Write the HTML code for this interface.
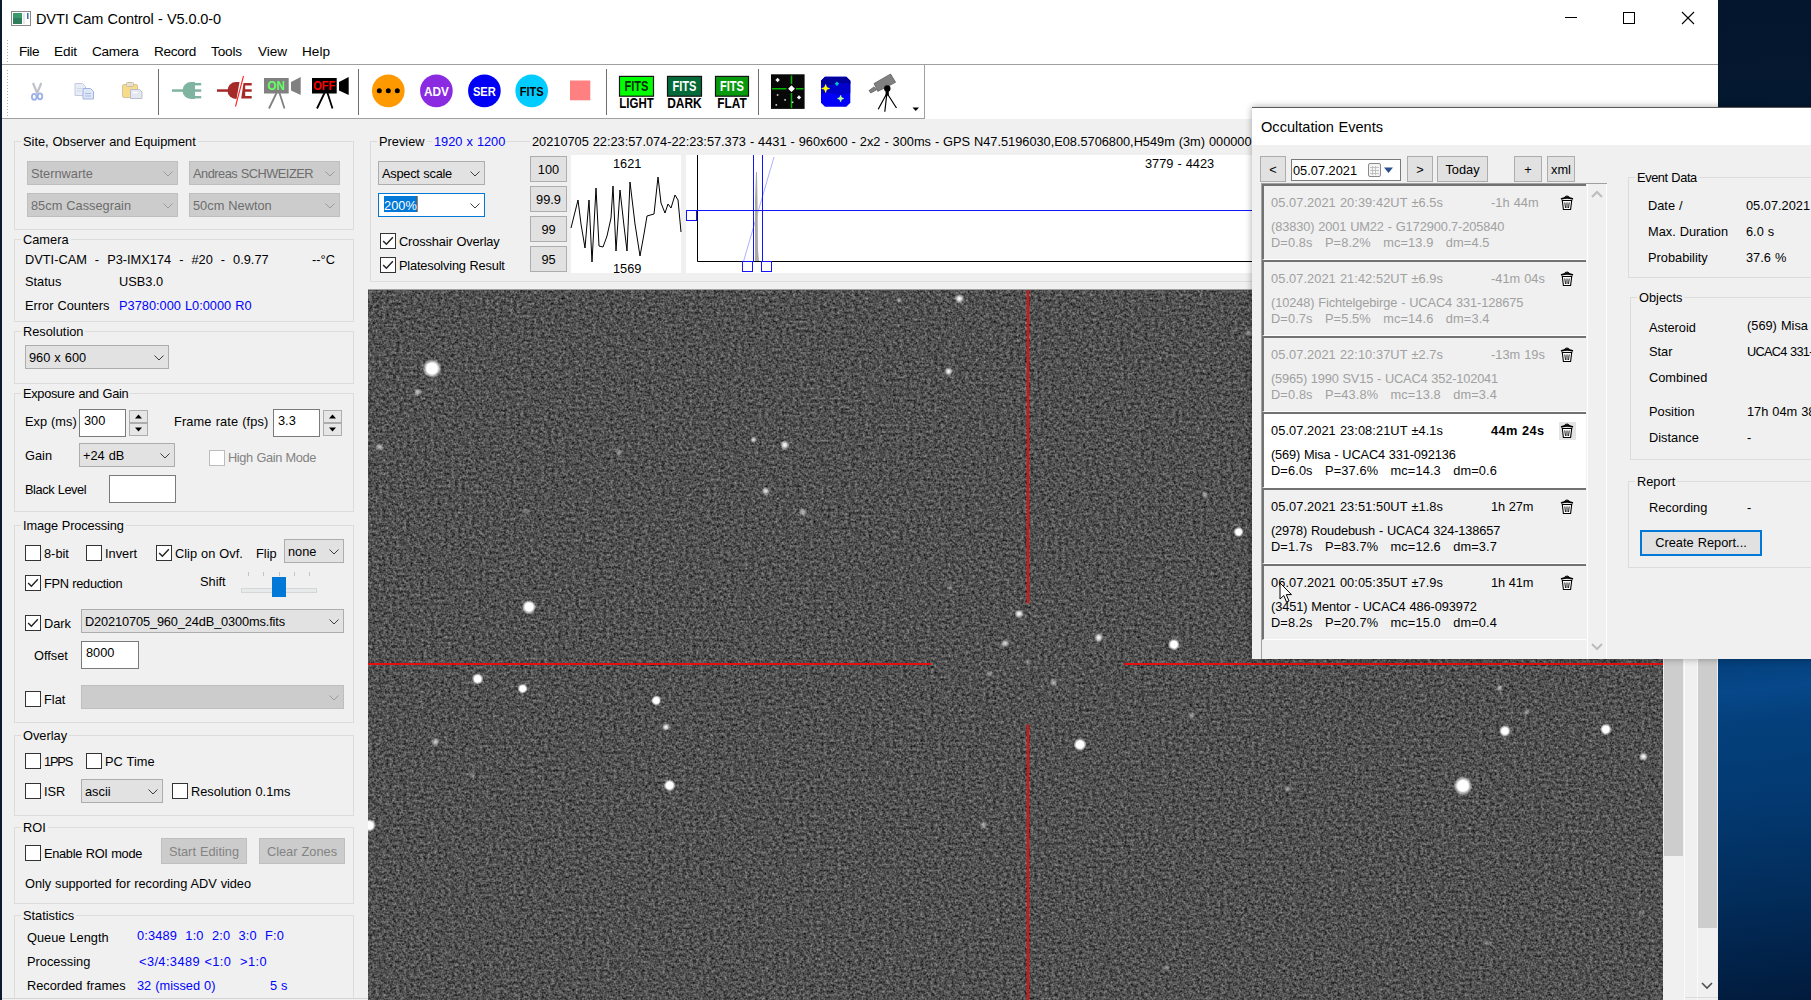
<!DOCTYPE html>
<html><head><meta charset="utf-8"><title>DVTI Cam Control - V5.0.0-0</title>
<style>
html,body{margin:0;padding:0;}
body{width:1811px;height:1000px;overflow:hidden;position:relative;background:#f0f0f0;font-family:"Liberation Sans",sans-serif;font-size:12.8px;color:#000;}
.t{position:absolute;white-space:pre;line-height:16px;font-size:12.8px;word-spacing:0.45px;}
.tt{white-space:pre;font-size:12.8px;word-spacing:0.45px;}
.abs{position:absolute}
</style></head><body>

<div class="" style="position:absolute;left:1718px;top:0px;width:93px;height:1000px;background:linear-gradient(174deg,#04162d 0%,#04182f 10.7%,#04407d 65.8%,#07488a 68.7%,#04407c 71.5%,#033970 80%,#022b58 90%,#011b3c 100%)"></div>
<div class="" style="position:absolute;left:0px;top:0px;width:2px;height:1000px;background:#0b1a2c"></div>
<div class="" style="position:absolute;left:2px;top:0px;width:1716px;height:37px;background:#fff"></div>
<div class="" style="position:absolute;left:2px;top:37px;width:1716px;height:27px;background:#fff"></div>
<div class="" style="position:absolute;left:2px;top:64px;width:1716px;height:1px;background:#a0a0a0"></div>
<div class="" style="position:absolute;left:2px;top:65px;width:1716px;height:54px;background:#fff"></div>
<svg class="abs" style="left:11px;top:11px" width="20" height="15" viewBox="0 0 20 15"><rect x="0.5" y="0.5" width="19" height="14" fill="#fff" stroke="#8a8a8a"/><rect x="2" y="2" width="9" height="11" fill="#2f7d5b"/><rect x="2" y="2" width="9" height="5" fill="#3a9a6c"/><rect x="12" y="2" width="2" height="11" fill="#e8e8e8"/><rect x="16" y="2" width="1.5" height="6" fill="#3a6fb0"/></svg>
<div class="t " style="left:36px;top:10.71px;font-size:14.5px;letter-spacing:-0.109px;">DVTI Cam Control - V5.0.0-0</div>
<svg class="abs" style="left:1560px;top:6px" width="150" height="26" viewBox="0 0 150 26"><path d="M5 11.5 H17" stroke="#000" stroke-width="1"/><rect x="63.5" y="6.5" width="11" height="11" fill="none" stroke="#000"/><path d="M122 6 L134 18 M134 6 L122 18" stroke="#000" stroke-width="1.1"/></svg>
<div class="t " style="left:19px;top:43.51px;font-size:13.6px;letter-spacing:-0.477px;">File</div>
<div class="t " style="left:54px;top:43.51px;font-size:13.6px;letter-spacing:-0.109px;">Edit</div>
<div class="t " style="left:92px;top:43.51px;font-size:13.6px;letter-spacing:-0.310px;">Camera</div>
<div class="t " style="left:154px;top:43.51px;font-size:13.6px;letter-spacing:-0.305px;">Record</div>
<div class="t " style="left:211px;top:43.51px;font-size:13.6px;letter-spacing:-0.147px;">Tools</div>
<div class="t " style="left:258px;top:43.51px;font-size:13.6px;letter-spacing:-0.055px;">View</div>
<div class="t " style="left:302px;top:43.51px;font-size:13.6px;letter-spacing:0.008px;">Help</div>
<div class="" style="position:absolute;left:7px;top:40px;width:1px;height:1px;background:#b0b0b0"></div>
<div class="" style="position:absolute;left:7px;top:43px;width:1px;height:1px;background:#b0b0b0"></div>
<div class="" style="position:absolute;left:7px;top:46px;width:1px;height:1px;background:#b0b0b0"></div>
<div class="" style="position:absolute;left:7px;top:49px;width:1px;height:1px;background:#b0b0b0"></div>
<div class="" style="position:absolute;left:7px;top:52px;width:1px;height:1px;background:#b0b0b0"></div>
<div class="" style="position:absolute;left:7px;top:55px;width:1px;height:1px;background:#b0b0b0"></div>
<div class="" style="position:absolute;left:7px;top:58px;width:1px;height:1px;background:#b0b0b0"></div>
<div class="" style="position:absolute;left:7px;top:61px;width:1px;height:1px;background:#b0b0b0"></div>
<div class="" style="position:absolute;left:7px;top:70px;width:1px;height:1px;background:#b0b0b0"></div>
<div class="" style="position:absolute;left:7px;top:73px;width:1px;height:1px;background:#b0b0b0"></div>
<div class="" style="position:absolute;left:7px;top:76px;width:1px;height:1px;background:#b0b0b0"></div>
<div class="" style="position:absolute;left:7px;top:79px;width:1px;height:1px;background:#b0b0b0"></div>
<div class="" style="position:absolute;left:7px;top:82px;width:1px;height:1px;background:#b0b0b0"></div>
<div class="" style="position:absolute;left:7px;top:85px;width:1px;height:1px;background:#b0b0b0"></div>
<div class="" style="position:absolute;left:7px;top:88px;width:1px;height:1px;background:#b0b0b0"></div>
<div class="" style="position:absolute;left:7px;top:91px;width:1px;height:1px;background:#b0b0b0"></div>
<div class="" style="position:absolute;left:7px;top:94px;width:1px;height:1px;background:#b0b0b0"></div>
<div class="" style="position:absolute;left:7px;top:97px;width:1px;height:1px;background:#b0b0b0"></div>
<div class="" style="position:absolute;left:7px;top:100px;width:1px;height:1px;background:#b0b0b0"></div>
<div class="" style="position:absolute;left:7px;top:103px;width:1px;height:1px;background:#b0b0b0"></div>
<div class="" style="position:absolute;left:7px;top:106px;width:1px;height:1px;background:#b0b0b0"></div>
<div class="" style="position:absolute;left:7px;top:109px;width:1px;height:1px;background:#b0b0b0"></div>
<div class="" style="position:absolute;left:7px;top:112px;width:1px;height:1px;background:#b0b0b0"></div>
<div class="" style="position:absolute;left:7px;top:115px;width:1px;height:1px;background:#b0b0b0"></div>
<div class="" style="position:absolute;left:2px;top:118px;width:923px;height:1px;background:#a0a0a0"></div>
<div class="" style="position:absolute;left:924px;top:65px;width:1px;height:54px;background:#a0a0a0"></div>
<!-- toolbar -->
<div class="" style="position:absolute;left:158px;top:69px;width:1px;height:46px;background:#6e6e6e"></div>
<div class="" style="position:absolute;left:358px;top:69px;width:1px;height:46px;background:#6e6e6e"></div>
<div class="" style="position:absolute;left:606px;top:69px;width:1px;height:46px;background:#6e6e6e"></div>
<div class="" style="position:absolute;left:758px;top:69px;width:1px;height:46px;background:#6e6e6e"></div>
<svg class="abs" style="left:0;top:65px" width="925" height="54" viewBox="0 65 925 54" font-family="Liberation Sans, sans-serif"><g opacity="0.9"><path d="M33 83 L37.300 93.500 M41.300 83 L37 93.500" stroke="#b9bcc4" stroke-width="2.2" fill="none"/><ellipse cx="34.200" cy="96.800" rx="2.300" ry="3" fill="#fff" stroke="#90a8e8" stroke-width="1.8"/><ellipse cx="40" cy="96.300" rx="2.300" ry="3" fill="#fff" stroke="#90a8e8" stroke-width="1.8"/></g><g><path d="M75 83.5 h7.5 l3 3 v9 h-10.5z" fill="#e9edf6" stroke="#c3cbe0"/><path d="M83 88.5 h7.5 l3 3 v7.5 h-10.5z" fill="#dfe6f6" stroke="#9fb2e2"/><path d="M85 93.5h6M85 96h6" stroke="#a9bce8" stroke-width="1"/><path d="M77 88.5h5M77 91h4" stroke="#cdd5ea" stroke-width="1"/></g><g transform="translate(-1,0)"><rect x="123.5" y="84.5" width="15" height="13" rx="1.5" fill="#f6dc8a" stroke="#d9c39a"/><rect x="127.5" y="82.5" width="7" height="4" rx="1" fill="#e8e1cf" stroke="#c9bfa6"/><path d="M131.5 89.5 h9 l2.500 2.5 v6.500 h-11.500z" fill="#e4e8f0" stroke="#b9bfcc"/><path d="M133.500 92.500h5" stroke="#fff" stroke-width="1.5"/></g><g fill="#7fb5a0"><rect x="172" y="89.300" width="12" height="2.500"/><path d="M195 82 h-4 a8.500 8.500 0 0 0 0 17 h4z"/><rect x="194" y="83" width="7.200" height="2.400"/><rect x="194" y="89.300" width="7.200" height="2.500"/><rect x="194" y="96" width="7.200" height="2.400"/></g><g fill="#a52a2a"><rect x="217" y="89.300" width="12" height="2.500"/><path d="M239.500 82 h-3.500 a8.500 8.500 0 0 0 0 17 h0.500z"/><path d="M243.500 83 h8.200 v2.400 h-6.500 v3.900 h6.500 v2.500 h-6.500 v4.200 h6.500 v2.400 h-10.500z"/></g><path d="M243.500 76 L235.500 106.500" stroke="#ff2222" stroke-width="1.100"/><g><rect x="264" y="78" width="24.700" height="15.500" fill="#808080"/><path d="M291 82 L300.7 77 V95 L291 90.500z" fill="#808080"/><path d="M276.5 93 L269 108.500 M279.5 93 L284.5 108.500" stroke="#808080" stroke-width="1.800" fill="none"/><text x="276.3" y="90.300" text-anchor="middle" font-size="12.500" font-weight="bold" fill="#66ff66" textLength="17.5" lengthAdjust="spacingAndGlyphs">ON</text></g><g><rect x="312" y="78" width="24.700" height="15.500" fill="#000"/><path d="M339 82 L348.7 77 V95 L339 90.500z" fill="#000"/><path d="M324.5 93 L317 108.500 M327.5 93 L332.5 108.500" stroke="#000" stroke-width="1.800" fill="none"/><text x="324.3" y="90.300" text-anchor="middle" font-size="12.500" font-weight="bold" fill="#ff0000" textLength="22" lengthAdjust="spacingAndGlyphs">OFF</text></g><circle cx="388.3" cy="90.900" r="16.300" fill="#ff9900"/><circle cx="379.3" cy="90.700" r="2.500" fill="#000"/><circle cx="388.3" cy="90.700" r="2.500" fill="#000"/><circle cx="397.3" cy="90.700" r="2.500" fill="#000"/><circle cx="436.4" cy="90.900" r="16.300" fill="#8a2be2"/><text x="436.4" y="95.500" text-anchor="middle" font-size="12.800" font-weight="bold" fill="#fff" textLength="25" lengthAdjust="spacingAndGlyphs">ADV</text><circle cx="484.4" cy="90.900" r="16.300" fill="#0000f5"/><text x="484.4" y="95.500" text-anchor="middle" font-size="12.800" font-weight="bold" fill="#fff" textLength="23" lengthAdjust="spacingAndGlyphs">SER</text><circle cx="531.7" cy="90.900" r="16.300" fill="#00ccff"/><text x="531.7" y="95.500" text-anchor="middle" font-size="12.800" font-weight="bold" fill="#000" textLength="24" lengthAdjust="spacingAndGlyphs">FITS</text><rect x="570" y="80.500" width="20.300" height="19.800" fill="#ff8080"/><rect x="619.5" y="76.400" width="34" height="19.800" fill="#00ff00" stroke="#141414" stroke-width="1.200"/><text x="636.5" y="90.500" text-anchor="middle" font-size="14.200" font-weight="bold" fill="#042a0c" textLength="24" lengthAdjust="spacingAndGlyphs">FITS</text><text x="636.5" y="107.800" text-anchor="middle" font-size="14.200" font-weight="bold" fill="#000" textLength="34.5" lengthAdjust="spacingAndGlyphs">LIGHT</text><rect x="667.5" y="76.400" width="34" height="19.800" fill="#056a3a" stroke="#141414" stroke-width="1.200"/><text x="684.5" y="90.500" text-anchor="middle" font-size="14.200" font-weight="bold" fill="#fff" textLength="24" lengthAdjust="spacingAndGlyphs">FITS</text><text x="684.5" y="107.800" text-anchor="middle" font-size="14.200" font-weight="bold" fill="#000" textLength="34.5" lengthAdjust="spacingAndGlyphs">DARK</text><rect x="715.5" y="76.400" width="33" height="19.800" fill="#079a0c" stroke="#141414" stroke-width="1.200"/><text x="732.0" y="90.500" text-anchor="middle" font-size="14.200" font-weight="bold" fill="#fff" textLength="24" lengthAdjust="spacingAndGlyphs">FITS</text><text x="732.0" y="107.800" text-anchor="middle" font-size="14.200" font-weight="bold" fill="#000" textLength="29.5" lengthAdjust="spacingAndGlyphs">FLAT</text><rect x="771" y="74.300" width="33.600" height="34.600" fill="#080808"/><path d="M791.500 75.500 V84 M791.500 93 V108 M772 88.700 H786.500 M796 88.700 H803.600" stroke="#00b400" stroke-width="1.500"/><path d="M788.1 88.7 L791.5 85.3 L794.9 88.7 L791.5 92.10000000000001z" fill="#fff"/><path d="M775.4 80 L777.6 77.8 L779.8000000000001 80 L777.6 82.2z" fill="#f4f4ff"/><path d="M796.8 97.4 L799 95.2 L801.2 97.4 L799 99.60000000000001z" fill="#f4f4ff"/><rect x="776.8000000000001" y="94.2" width="1.600" height="1.600" fill="#d8d8e0"/><rect x="784.3000000000001" y="99.10000000000001" width="1.600" height="1.600" fill="#d8d8e0"/><rect x="775.5" y="104.10000000000001" width="1.600" height="1.600" fill="#d8d8e0"/><rect x="791.8000000000001" y="101.5" width="1.600" height="1.600" fill="#d8d8e0"/><path d="M825 76.800 h21.300 l4 4 v22 l-4 4 h-21.300 l-4 -4 v-22z" fill="#0000fa"/><path d="M821 94 q7 -1.500 14 0 t15.300 -1 v-12 l-4 -4 h-21.300 l-4 4z" fill="#0000cc"/><path d="M821 84 q7 2 14 0 t15.300 0 v-3.200 l-4 -4 h-21.300 l-4 4z" fill="#00009c"/><path d="M821.6 88.5 Q825.6 88.5 825.6 84.5 Q825.6 88.5 829.6 88.5 Q825.6 88.5 825.6 92.5 Q825.6 88.5 821.6 88.5z" fill="#ffff00" stroke="#ffff00" stroke-width="1.100"/><path d="M834.9 83.7 Q836.9 83.7 836.9 81.7 Q836.9 83.7 838.9 83.7 Q836.9 83.7 836.9 85.7 Q836.9 83.7 834.9 83.7z" fill="#00c8d0" stroke="#00c8d0" stroke-width="1.100"/><path d="M837.4 98.5 Q840.6 98.5 840.6 95.3 Q840.6 98.5 843.8000000000001 98.5 Q840.6 98.5 840.6 101.7 Q840.6 98.5 837.4 98.5z" fill="#b0ff90" stroke="#b0ff90" stroke-width="1.100"/><g><path d="M874 83.500 L890.600 74 L895.600 82.300 L877.800 91.400z" fill="#808080" stroke="#555" stroke-width="0.700"/><path d="M869 90.600 L874 86.900 L876.500 89.800 L870.800 93z" fill="#808080" stroke="#555" stroke-width="0.700"/><circle cx="887.300" cy="88.500" r="3.200" fill="#000"/><rect x="885.600" y="88" width="3.200" height="7.500" fill="#000"/><path d="M886.500 94 L878.200 109.200 M886.800 94 L884.800 111.700 M887.500 94 L896.500 108" stroke="#000" stroke-width="1.200" fill="none"/></g><path d="M912.500 107.500 h6.500 l-3.250 3.500z" fill="#000"/></svg>
<!-- left -->
<div class="" style="position:absolute;left:14px;top:141px;width:340px;height:89px;border:1px solid #dcdcdc;box-sizing:border-box"></div>
<div class="t" style="left:21px;top:134px;background:#f0f0f0;padding:0 2px;">Site, Observer and Equipment</div>
<div class="" style="position:absolute;left:27px;top:161px;width:151px;height:24px;background:#ccc;border:1px solid #bfbfbf;box-sizing:border-box"></div>
<div class="t " style="left:31px;top:165.77px;color:#6d6d6d;">Sternwarte</div>
<svg style="position:absolute;left:163px;top:171px" width="10" height="6" viewBox="0 0 10 6"><path d="M0.5 0.5 L5 5 L9.5 0.5" fill="none" stroke="#9a9a9a" stroke-width="1"/></svg>
<div class="" style="position:absolute;left:189px;top:161px;width:151px;height:24px;background:#ccc;border:1px solid #bfbfbf;box-sizing:border-box"></div>
<div class="t " style="left:193px;top:165.77px;color:#6d6d6d;letter-spacing:-0.497px;">Andreas SCHWEIZER</div>
<svg style="position:absolute;left:325px;top:171px" width="10" height="6" viewBox="0 0 10 6"><path d="M0.5 0.5 L5 5 L9.5 0.5" fill="none" stroke="#9a9a9a" stroke-width="1"/></svg>
<div class="" style="position:absolute;left:27px;top:193px;width:151px;height:24px;background:#ccc;border:1px solid #bfbfbf;box-sizing:border-box"></div>
<div class="t " style="left:31px;top:197.77px;color:#6d6d6d;">85cm Cassegrain</div>
<svg style="position:absolute;left:163px;top:203px" width="10" height="6" viewBox="0 0 10 6"><path d="M0.5 0.5 L5 5 L9.5 0.5" fill="none" stroke="#9a9a9a" stroke-width="1"/></svg>
<div class="" style="position:absolute;left:189px;top:193px;width:151px;height:24px;background:#ccc;border:1px solid #bfbfbf;box-sizing:border-box"></div>
<div class="t " style="left:193px;top:197.77px;color:#6d6d6d;">50cm Newton</div>
<svg style="position:absolute;left:325px;top:203px" width="10" height="6" viewBox="0 0 10 6"><path d="M0.5 0.5 L5 5 L9.5 0.5" fill="none" stroke="#9a9a9a" stroke-width="1"/></svg>
<div class="" style="position:absolute;left:14px;top:239px;width:340px;height:83px;border:1px solid #dcdcdc;box-sizing:border-box"></div>
<div class="t" style="left:21px;top:232px;background:#f0f0f0;padding:0 2px;">Camera</div>
<div class="t " style="left:25px;top:251.77px;">DVTI-CAM  -  P3-IMX174  -  #20  -  0.9.77</div>
<div class="t " style="left:312px;top:251.77px;">--°C</div>
<div class="t " style="left:25px;top:273.77px;">Status</div>
<div class="t " style="left:119px;top:273.77px;">USB3.0</div>
<div class="t " style="left:25px;top:297.77px;">Error Counters</div>
<div class="t " style="left:119px;top:297.77px;color:#0000ff;">P3780:000 L0:0000 R0</div>
<div class="" style="position:absolute;left:14px;top:331px;width:340px;height:53px;border:1px solid #dcdcdc;box-sizing:border-box"></div>
<div class="t" style="left:21px;top:324px;background:#f0f0f0;padding:0 2px;">Resolution</div>
<div class="" style="position:absolute;left:25px;top:345px;width:144px;height:24px;background:#e2e2e2;border:1px solid #adadad;box-sizing:border-box"></div>
<div class="t " style="left:29px;top:349.77px;">960 x 600</div>
<svg style="position:absolute;left:154px;top:355px" width="10" height="6" viewBox="0 0 10 6"><path d="M0.5 0.5 L5 5 L9.5 0.5" fill="none" stroke="#3c3c3c" stroke-width="1"/></svg>
<div class="" style="position:absolute;left:14px;top:393px;width:340px;height:119px;border:1px solid #dcdcdc;box-sizing:border-box"></div>
<div class="t" style="left:21px;top:386px;background:#f0f0f0;padding:0 2px;letter-spacing:-0.298px;">Exposure and Gain</div>
<div class="t " style="left:25px;top:413.77px;">Exp (ms)</div>
<div class="" style="position:absolute;left:79px;top:409px;width:47px;height:28px;background:#fff;border:1px solid #7a7a7a;box-sizing:border-box"></div>
<div class="t " style="left:84px;top:412.77px;">300</div>
<div class="" style="position:absolute;left:129px;top:410px;width:19px;height:13px;background:#e6e6e6;border:1px solid #adadad;box-sizing:border-box"><svg width="17" height="11" style="display:block"><path d="M5 7.500 L8.500 3.500 L12 7.500Z" fill="#000"/></svg></div>
<div class="" style="position:absolute;left:129px;top:423px;width:19px;height:13px;background:#e6e6e6;border:1px solid #adadad;box-sizing:border-box"><svg width="17" height="11" style="display:block"><path d="M5 3.500 L8.500 7.500 L12 3.500Z" fill="#000"/></svg></div>
<div class="t " style="left:174px;top:413.77px;letter-spacing:0.110px;">Frame rate (fps)</div>
<div class="" style="position:absolute;left:273px;top:409px;width:47px;height:28px;background:#fff;border:1px solid #7a7a7a;box-sizing:border-box"></div>
<div class="t " style="left:278px;top:412.77px;">3.3</div>
<div class="" style="position:absolute;left:323px;top:410px;width:19px;height:13px;background:#e6e6e6;border:1px solid #adadad;box-sizing:border-box"><svg width="17" height="11" style="display:block"><path d="M5 7.500 L8.500 3.500 L12 7.500Z" fill="#000"/></svg></div>
<div class="" style="position:absolute;left:323px;top:423px;width:19px;height:13px;background:#e6e6e6;border:1px solid #adadad;box-sizing:border-box"><svg width="17" height="11" style="display:block"><path d="M5 3.500 L8.500 7.500 L12 3.500Z" fill="#000"/></svg></div>
<div class="t " style="left:25px;top:447.77px;">Gain</div>
<div class="" style="position:absolute;left:79px;top:443px;width:96px;height:24px;background:#e2e2e2;border:1px solid #adadad;box-sizing:border-box"></div>
<div class="t " style="left:83px;top:447.77px;">+24 dB</div>
<svg style="position:absolute;left:160px;top:453px" width="10" height="6" viewBox="0 0 10 6"><path d="M0.5 0.5 L5 5 L9.5 0.5" fill="none" stroke="#3c3c3c" stroke-width="1"/></svg>
<div class="" style="position:absolute;left:209px;top:450px;width:16px;height:16px;background:#fff;border:1px solid #bcbcbc;box-sizing:border-box"></div>
<div class="t " style="left:228px;top:449.77px;color:#838383;letter-spacing:-0.384px;">High Gain Mode</div>
<div class="t " style="left:25px;top:481.77px;letter-spacing:-0.426px;">Black Level</div>
<div class="" style="position:absolute;left:109px;top:475px;width:67px;height:28px;background:#fff;border:1px solid #7a7a7a;box-sizing:border-box"></div>
<div class="" style="position:absolute;left:14px;top:525px;width:340px;height:198px;border:1px solid #dcdcdc;box-sizing:border-box"></div>
<div class="t" style="left:21px;top:518px;background:#f0f0f0;padding:0 2px;letter-spacing:-0.137px;">Image Processing</div>
<div class="" style="position:absolute;left:25px;top:545px;width:16px;height:16px;background:#fff;border:1px solid #333;box-sizing:border-box"></div>
<div class="t " style="left:44px;top:545.77px;">8-bit</div>
<div class="" style="position:absolute;left:86px;top:545px;width:16px;height:16px;background:#fff;border:1px solid #333;box-sizing:border-box"></div>
<div class="t " style="left:105px;top:545.77px;">Invert</div>
<div class="" style="position:absolute;left:156px;top:545px;width:16px;height:16px;background:#fff;border:1px solid #333;box-sizing:border-box"><svg width="14" height="14" viewBox="0 0 13 13" style="display:block"><path d="M2 6.5 L5 9.5 L11 3" fill="none" stroke="#222" stroke-width="1.3"/></svg></div>
<div class="t " style="left:175px;top:545.77px;">Clip on Ovf.</div>
<div class="t " style="left:256px;top:545.77px;">Flip</div>
<div class="" style="position:absolute;left:284px;top:539px;width:60px;height:24px;background:#e2e2e2;border:1px solid #adadad;box-sizing:border-box"></div>
<div class="t " style="left:288px;top:543.77px;">none</div>
<svg style="position:absolute;left:329px;top:549px" width="10" height="6" viewBox="0 0 10 6"><path d="M0.5 0.5 L5 5 L9.5 0.5" fill="none" stroke="#3c3c3c" stroke-width="1"/></svg>
<div class="" style="position:absolute;left:25px;top:575px;width:16px;height:16px;background:#fff;border:1px solid #333;box-sizing:border-box"><svg width="14" height="14" viewBox="0 0 13 13" style="display:block"><path d="M2 6.5 L5 9.5 L11 3" fill="none" stroke="#222" stroke-width="1.3"/></svg></div>
<div class="t " style="left:44px;top:575.77px;letter-spacing:-0.312px;">FPN reduction</div>
<div class="t " style="left:200px;top:573.77px;">Shift</div>
<div class="" style="position:absolute;left:248px;top:572px;width:1px;height:4px;background:#c4c4c4"></div>
<div class="" style="position:absolute;left:263px;top:572px;width:1px;height:4px;background:#c4c4c4"></div>
<div class="" style="position:absolute;left:279px;top:572px;width:1px;height:4px;background:#c4c4c4"></div>
<div class="" style="position:absolute;left:294px;top:572px;width:1px;height:4px;background:#c4c4c4"></div>
<div class="" style="position:absolute;left:309px;top:572px;width:1px;height:4px;background:#c4c4c4"></div>
<div class="" style="position:absolute;left:241px;top:588px;width:76px;height:5px;background:#e7eaea;border:1px solid #d6d6d6;box-sizing:border-box"></div>
<div class="" style="position:absolute;left:272px;top:577px;width:14px;height:20px;background:#0078d7"></div>
<div class="" style="position:absolute;left:25px;top:615px;width:16px;height:16px;background:#fff;border:1px solid #333;box-sizing:border-box"><svg width="14" height="14" viewBox="0 0 13 13" style="display:block"><path d="M2 6.5 L5 9.5 L11 3" fill="none" stroke="#222" stroke-width="1.3"/></svg></div>
<div class="t " style="left:44px;top:615.77px;">Dark</div>
<div class="" style="position:absolute;left:81px;top:609px;width:263px;height:24px;background:#e2e2e2;border:1px solid #adadad;box-sizing:border-box"></div>
<div class="t " style="left:85px;top:613.77px;letter-spacing:-0.140px;">D20210705_960_24dB_0300ms.fits</div>
<svg style="position:absolute;left:329px;top:619px" width="10" height="6" viewBox="0 0 10 6"><path d="M0.5 0.5 L5 5 L9.5 0.5" fill="none" stroke="#3c3c3c" stroke-width="1"/></svg>
<div class="t " style="left:34px;top:647.77px;">Offset</div>
<div class="" style="position:absolute;left:81px;top:641px;width:58px;height:28px;background:#fff;border:1px solid #7a7a7a;box-sizing:border-box"></div>
<div class="t " style="left:86px;top:644.77px;">8000</div>
<div class="" style="position:absolute;left:25px;top:691px;width:16px;height:16px;background:#fff;border:1px solid #333;box-sizing:border-box"></div>
<div class="t " style="left:44px;top:691.77px;">Flat</div>
<div class="" style="position:absolute;left:81px;top:685px;width:263px;height:24px;background:#ccc;border:1px solid #bfbfbf;box-sizing:border-box"></div>
<svg style="position:absolute;left:329px;top:695px" width="10" height="6" viewBox="0 0 10 6"><path d="M0.5 0.5 L5 5 L9.5 0.5" fill="none" stroke="#9a9a9a" stroke-width="1"/></svg>
<div class="" style="position:absolute;left:14px;top:735px;width:340px;height:81px;border:1px solid #dcdcdc;box-sizing:border-box"></div>
<div class="t" style="left:21px;top:728px;background:#f0f0f0;padding:0 2px;">Overlay</div>
<div class="" style="position:absolute;left:25px;top:753px;width:16px;height:16px;background:#fff;border:1px solid #333;box-sizing:border-box"></div>
<div class="t " style="left:44px;top:753.77px;letter-spacing:-1.184px;">1PPS</div>
<div class="" style="position:absolute;left:86px;top:753px;width:16px;height:16px;background:#fff;border:1px solid #333;box-sizing:border-box"></div>
<div class="t " style="left:105px;top:753.77px;">PC Time</div>
<div class="" style="position:absolute;left:25px;top:783px;width:16px;height:16px;background:#fff;border:1px solid #333;box-sizing:border-box"></div>
<div class="t " style="left:44px;top:783.77px;">ISR</div>
<div class="" style="position:absolute;left:81px;top:779px;width:82px;height:24px;background:#e2e2e2;border:1px solid #adadad;box-sizing:border-box"></div>
<div class="t " style="left:85px;top:783.77px;">ascii</div>
<svg style="position:absolute;left:148px;top:789px" width="10" height="6" viewBox="0 0 10 6"><path d="M0.5 0.5 L5 5 L9.5 0.5" fill="none" stroke="#3c3c3c" stroke-width="1"/></svg>
<div class="" style="position:absolute;left:172px;top:783px;width:16px;height:16px;background:#fff;border:1px solid #333;box-sizing:border-box"></div>
<div class="t " style="left:191px;top:783.77px;">Resolution 0.1ms</div>
<div class="" style="position:absolute;left:14px;top:827px;width:340px;height:77px;border:1px solid #dcdcdc;box-sizing:border-box"></div>
<div class="t" style="left:21px;top:820px;background:#f0f0f0;padding:0 2px;">ROI</div>
<div class="" style="position:absolute;left:25px;top:845px;width:16px;height:16px;background:#fff;border:1px solid #333;box-sizing:border-box"></div>
<div class="t " style="left:44px;top:845.77px;letter-spacing:-0.308px;">Enable ROI mode</div>
<div class="tt" style="position:absolute;left:161px;top:838px;width:86px;height:26px;background:#ccc;border:1px solid #bfbfbf;box-sizing:border-box;text-align:center;color:#838383;line-height:25px">Start Editing</div>
<div class="tt" style="position:absolute;left:259px;top:838px;width:86px;height:26px;background:#ccc;border:1px solid #bfbfbf;box-sizing:border-box;text-align:center;color:#838383;line-height:25px">Clear Zones</div>
<div class="t " style="left:25px;top:875.77px;letter-spacing:-0.046px;">Only supported for recording ADV video</div>
<div class="" style="position:absolute;left:14px;top:915px;width:340px;height:120px;border:1px solid #dcdcdc;box-sizing:border-box"></div>
<div class="t" style="left:21px;top:908px;background:#f0f0f0;padding:0 2px;">Statistics</div>
<div class="" style="position:absolute;left:2px;top:998px;width:367px;height:1px;background:#d4d4d4"></div>
<div class="" style="position:absolute;left:2px;top:999px;width:367px;height:1px;background:#f0f0f0"></div>
<div class="t " style="left:27px;top:929.77px;">Queue Length</div>
<div class="t " style="left:137px;top:927.77px;color:#0000ff;letter-spacing:0.152px;">0:3489  1:0  2:0  3:0  F:0</div>
<div class="t " style="left:27px;top:953.77px;">Processing</div>
<div class="t " style="left:139px;top:953.77px;color:#0000ff;letter-spacing:0.409px;">&lt;3/4:3489 &lt;1:0  &gt;1:0</div>
<div class="t " style="left:27px;top:977.77px;">Recorded frames</div>
<div class="t " style="left:137px;top:977.77px;color:#0000ff;">32 (missed 0)</div>
<div class="t " style="left:270px;top:977.77px;color:#0000ff;">5 s</div>
<!-- preview -->
<div class="" style="position:absolute;left:370px;top:141px;width:900px;height:141px;border:1px solid #dcdcdc;box-sizing:border-box"></div>
<div class="t" style="left:377px;top:134px;background:#f0f0f0;padding:0 2px">Preview</div>
<div class="t" style="left:432px;top:134px;background:#f0f0f0;padding:0 2px;color:#0000ff">1920 x 1200</div>
<div class="t" style="left:530px;top:134px;background:#f0f0f0;padding:0 2px;letter-spacing:-0.022px;">20210705 22:23:57.074-22:23:57.373 - 4431 - 960x600 - 2x2 - 300ms - GPS N47.5196030,E08.5706800,H549m (3m) 000000</div>
<div class="" style="position:absolute;left:378px;top:161px;width:107px;height:24px;background:#e2e2e2;border:1px solid #adadad;box-sizing:border-box"></div>
<div class="t " style="left:382px;top:165.77px;letter-spacing:-0.251px;">Aspect scale</div>
<svg style="position:absolute;left:470px;top:171px" width="10" height="6" viewBox="0 0 10 6"><path d="M0.5 0.5 L5 5 L9.5 0.5" fill="none" stroke="#3c3c3c" stroke-width="1"/></svg>
<div class="" style="position:absolute;left:378px;top:193px;width:107px;height:24px;background:#fff;border:1px solid #0078d7;box-sizing:border-box"></div>
<svg style="position:absolute;left:470px;top:203px" width="10" height="6" viewBox="0 0 10 6"><path d="M0.5 0.5 L5 5 L9.5 0.5" fill="none" stroke="#3c3c3c" stroke-width="1"/></svg>
<div class="" style="position:absolute;left:384px;top:196px;width:33px;height:16px;background:#0078d7"></div>
<div class="t " style="left:384px;top:197.77px;color:#fff;letter-spacing:0.066px;">200%</div>
<div class="" style="position:absolute;left:417px;top:196px;width:1px;height:16px;background:#c07a40"></div>
<div class="" style="position:absolute;left:380px;top:233px;width:16px;height:16px;background:#fff;border:1px solid #333;box-sizing:border-box"><svg width="14" height="14" viewBox="0 0 13 13" style="display:block"><path d="M2 6.5 L5 9.5 L11 3" fill="none" stroke="#222" stroke-width="1.3"/></svg></div>
<div class="t " style="left:399px;top:233.77px;letter-spacing:-0.133px;">Crosshair Overlay</div>
<div class="" style="position:absolute;left:380px;top:257px;width:16px;height:16px;background:#fff;border:1px solid #333;box-sizing:border-box"><svg width="14" height="14" viewBox="0 0 13 13" style="display:block"><path d="M2 6.5 L5 9.5 L11 3" fill="none" stroke="#222" stroke-width="1.3"/></svg></div>
<div class="t " style="left:399px;top:257.77px;letter-spacing:-0.188px;">Platesolving Result</div>
<div class="tt" style="position:absolute;left:530px;top:156px;width:37px;height:26px;background:#e1e1e1;border:1px solid #adadad;box-sizing:border-box;text-align:center;line-height:26px">100</div>
<div class="tt" style="position:absolute;left:530px;top:186px;width:37px;height:26px;background:#e1e1e1;border:1px solid #adadad;box-sizing:border-box;text-align:center;line-height:26px">99.9</div>
<div class="tt" style="position:absolute;left:530px;top:216px;width:37px;height:26px;background:#e1e1e1;border:1px solid #adadad;box-sizing:border-box;text-align:center;line-height:26px">99</div>
<div class="tt" style="position:absolute;left:530px;top:246px;width:37px;height:26px;background:#e1e1e1;border:1px solid #adadad;box-sizing:border-box;text-align:center;line-height:26px">95</div>
<div class="" style="position:absolute;left:571px;top:155px;width:110px;height:118px;background:#fff"></div>
<div class="t " style="left:613px;top:155.77px;">1621</div>
<div class="t " style="left:613px;top:260.77px;">1569</div>
<svg class="abs" style="left:0;top:0" width="1260" height="290" viewBox="0 0 1260 290"><polyline points="571,228 578,200 581,224 585,248 589,200 592,262 596,188 599,246 603,247 607,236 611,218 613,186 616,251 620,190 624,226 627,251 630,182 635,224 640,256 644,234 647,216 654,214 658,177 661,203 665,213 668,204 671,208 675,195 678,200 681,232" fill="none" stroke="#000" stroke-width="1"/></svg>
<div class="" style="position:absolute;left:686px;top:155px;width:580px;height:118px;background:#fff"></div>
<div class="t " style="left:1145px;top:155.77px;">3779 - 4423</div>
<svg class="abs" style="left:686px;top:155px" width="580" height="118" viewBox="686 155 580 118"><path d="M743.5 261.500 L774 157" stroke="#9a9aff" stroke-width="0.800" fill="none"/><path d="M755 261 V200 L756 172 L757 172 L757.500 200 L758 250 L759 261z" fill="#a8a8a8"/><path d="M697.500 155 V261.500 H1266" stroke="#000" stroke-width="1" fill="none"/><path d="M686 210.500 H1266" stroke="#1414ff" stroke-width="1" fill="none"/><path d="M753.500 155 V262 M762.500 155 V262" stroke="#1414ff" stroke-width="1" fill="none"/><rect x="686.500" y="210.500" width="10" height="10" fill="#fff" stroke="#1414ff"/><rect x="742.500" y="261.500" width="10" height="10" fill="#fff" stroke="#1414ff"/><rect x="761.500" y="261.500" width="10" height="10" fill="#fff" stroke="#1414ff"/></svg>
<!-- image -->
<svg class="abs" style="left:368px;top:289px" width="1295" height="711" viewBox="368 289 1295 711"><defs><filter id="nz" x="0" y="0" width="100%" height="100%" color-interpolation-filters="sRGB"><feTurbulence type="fractalNoise" baseFrequency="0.63 0.57" numOctaves="1" seed="7"/><feColorMatrix type="matrix" values="1 0 0 0 0  1 0 0 0 0  1 0 0 0 0  0 0 0 0 1" result="a"/><feTurbulence type="fractalNoise" baseFrequency="0.29 0.33" numOctaves="2" seed="23"/><feColorMatrix type="matrix" values="1 0 0 0 0  1 0 0 0 0  1 0 0 0 0  0 0 0 0 1" result="b"/><feComposite in="a" in2="b" operator="arithmetic" k1="0" k2="0.5" k3="0.5" k4="0"/><feColorMatrix type="matrix" values="0.92 0 0 0 -0.145  0.92 0 0 0 -0.145  0.92 0 0 0 -0.145  0 0 0 0 1"/></filter><radialGradient id="sg"><stop offset="0" stop-color="#fff" stop-opacity="1"/><stop offset="0.55" stop-color="#fff" stop-opacity="1"/><stop offset="0.8" stop-color="#fff" stop-opacity="0.45"/><stop offset="1" stop-color="#fff" stop-opacity="0"/></radialGradient><radialGradient id="sf"><stop offset="0" stop-color="#fff" stop-opacity="1"/><stop offset="0.35" stop-color="#fff" stop-opacity="0.8"/><stop offset="1" stop-color="#fff" stop-opacity="0"/></radialGradient></defs><rect x="368" y="289" width="1295" height="712" fill="#4d4d4d"/><rect x="368" y="289" width="1295" height="712" filter="url(#nz)"/><circle cx="432" cy="368.5" r="9.6" fill="url(#sg)" opacity="1"/><circle cx="417.6" cy="392" r="4.425" fill="url(#sf)" opacity="0.66"/><circle cx="379.8" cy="447" r="4.425" fill="url(#sf)" opacity="0.6"/><circle cx="529" cy="607" r="7.3" fill="url(#sg)" opacity="1"/><circle cx="959.4" cy="298.7" r="5.23" fill="url(#sf)" opacity="1"/><circle cx="899" cy="300" r="3.275" fill="url(#sf)" opacity="0.48"/><circle cx="948.6" cy="371.4" r="4.425" fill="url(#sf)" opacity="1"/><circle cx="784.8" cy="445" r="5.0" fill="url(#sf)" opacity="1"/><circle cx="753.5" cy="439.8" r="3.275" fill="url(#sf)" opacity="0.84"/><circle cx="765.7" cy="491" r="4.425" fill="url(#sf)" opacity="0.84"/><circle cx="802.8" cy="512.5" r="4.425" fill="url(#sf)" opacity="0.6"/><circle cx="619" cy="452" r="3.8499999999999996" fill="url(#sf)" opacity="0.42"/><circle cx="525.6" cy="511.8" r="3.8499999999999996" fill="url(#sf)" opacity="0.3"/><circle cx="950" cy="587" r="3.8499999999999996" fill="url(#sf)" opacity="0.3"/><circle cx="477.7" cy="678.9" r="5.92" fill="url(#sg)" opacity="1"/><circle cx="522.7" cy="688.6" r="5.23" fill="url(#sg)" opacity="1"/><circle cx="656.3" cy="700.5" r="5.23" fill="url(#sg)" opacity="1"/><circle cx="666" cy="727" r="4.08" fill="url(#sf)" opacity="1"/><circle cx="435.6" cy="741.9" r="4.425" fill="url(#sf)" opacity="0.72"/><circle cx="669.6" cy="785.4" r="6.15" fill="url(#sg)" opacity="1"/><circle cx="369.3" cy="825.4" r="6.725" fill="url(#sg)" opacity="1"/><circle cx="983.5" cy="824.7" r="3.8499999999999996" fill="url(#sf)" opacity="0.54"/><circle cx="471.6" cy="775" r="3.8499999999999996" fill="url(#sf)" opacity="0.3"/><circle cx="990" cy="674" r="3.8499999999999996" fill="url(#sf)" opacity="0.42"/><circle cx="1004" cy="644" r="3.8499999999999996" fill="url(#sf)" opacity="0.48"/><circle cx="1174" cy="644.5" r="5.92" fill="url(#sg)" opacity="1"/><circle cx="1080" cy="744.6" r="6.61" fill="url(#sg)" opacity="1"/><circle cx="1463" cy="785.8" r="9.6" fill="url(#sg)" opacity="1"/><circle cx="1505" cy="731" r="5.92" fill="url(#sg)" opacity="1"/><circle cx="1605.8" cy="729.3" r="5.92" fill="url(#sg)" opacity="1"/><circle cx="1643.4" cy="756.6" r="4.77" fill="url(#sf)" opacity="1"/><circle cx="1499.4" cy="688" r="3.275" fill="url(#sf)" opacity="0.66"/><circle cx="1526.8" cy="711.8" r="3.275" fill="url(#sf)" opacity="0.48"/><circle cx="1191.5" cy="715.4" r="3.8499999999999996" fill="url(#sf)" opacity="0.54"/><circle cx="1053.7" cy="682.6" r="4.425" fill="url(#sf)" opacity="0.54"/><circle cx="1287.7" cy="788.7" r="3.275" fill="url(#sf)" opacity="0.54"/><circle cx="1027.5" cy="662" r="3.8499999999999996" fill="url(#sf)" opacity="0.36"/><circle cx="1642" cy="912.6" r="3.8499999999999996" fill="url(#sf)" opacity="0.3"/><circle cx="1487" cy="942.5" r="3.8499999999999996" fill="url(#sf)" opacity="0.3"/><circle cx="1166.7" cy="968" r="3.8499999999999996" fill="url(#sf)" opacity="0.3"/><circle cx="1238.6" cy="532" r="5.23" fill="url(#sg)" opacity="1"/><circle cx="1205" cy="494.7" r="3.8499999999999996" fill="url(#sf)" opacity="0.48"/><circle cx="1019" cy="613.7" r="4.77" fill="url(#sf)" opacity="1"/><circle cx="1098.8" cy="637.6" r="4.77" fill="url(#sf)" opacity="1"/><circle cx="1005.7" cy="643" r="4.08" fill="url(#sf)" opacity="0.6"/><circle cx="1249" cy="332.5" r="3.8499999999999996" fill="url(#sf)" opacity="0.48"/><rect x="368" y="289" width="1295" height="1" fill="#a2a2a2"/><g fill="#e60f0f"><rect x="1027" y="290" width="2" height="313.500"/><rect x="1027" y="724.500" width="2" height="276"/><rect x="368" y="663" width="563.500" height="2"/><rect x="1124" y="663" width="539" height="2"/></g></svg>
<div class="" style="position:absolute;left:1663px;top:290px;width:21px;height:710px;background:#f0f0f0"></div>
<div class="" style="position:absolute;left:1664px;top:290px;width:19px;height:566px;background:#cdcdcd"></div>
<div class="" style="position:absolute;left:1684px;top:290px;width:1px;height:710px;background:#fafafa"></div>
<div class="" style="position:absolute;left:1697px;top:290px;width:1px;height:710px;background:#fafafa"></div>
<div class="" style="position:absolute;left:1698px;top:119px;width:20px;height:881px;background:#f0f0f0"></div>
<div class="" style="position:absolute;left:1698px;top:119px;width:19px;height:809px;background:#cdcdcd"></div>
<svg class="abs" style="left:1701px;top:982px" width="12" height="8" viewBox="0 0 12 8"><path d="M1 1 L6 6 L11 1" fill="none" stroke="#505050" stroke-width="1.600"/></svg>
<div class="" style="position:absolute;left:1685px;top:997px;width:33px;height:1px;background:#dcdcdc"></div>
<!-- dialog -->
<div class="" style="position:absolute;left:1252px;top:107px;width:570px;height:552px;background:#f0f0f0;box-shadow:0 0 7px rgba(0,0,0,0.35);border-top:1px solid #5a5a5a;box-sizing:border-box"></div>
<div class="" style="position:absolute;left:1252px;top:108px;width:570px;height:37px;background:#fff"></div>
<div class="t " style="left:1261px;top:119.17px;font-size:14.6px;letter-spacing:-0.007px;">Occultation Events</div>
<div class="tt" style="position:absolute;left:1260px;top:156px;width:26px;height:26px;background:#e1e1e1;border:1px solid #adadad;box-sizing:border-box;text-align:center;line-height:26px">&lt;</div>
<div class="" style="position:absolute;left:1291px;top:159px;width:110px;height:22px;background:#fff;border:1px solid #7a7a7a;box-sizing:border-box"></div>
<div class="t " style="left:1293px;top:162.77px;">05.07.2021</div>
<svg class="abs" style="left:1367px;top:162px" width="30" height="16" viewBox="0 0 30 16"><rect x="1.500" y="1.500" width="12" height="13" rx="1.500" fill="#f4f4f4" stroke="#8a8a8a"/><path d="M3 5.500h9M3 8.500h9M3 11.500h9M5.500 4v9M8.500 4v9" stroke="#b8b8b8" stroke-width="0.800"/><path d="M17 5.500 h9 l-4.500 5.500z" fill="#2d4f8e"/></svg>
<div class="tt" style="position:absolute;left:1407px;top:156px;width:26px;height:26px;background:#e1e1e1;border:1px solid #adadad;box-sizing:border-box;text-align:center;line-height:26px">&gt;</div>
<div class="tt" style="position:absolute;left:1437px;top:156px;width:51px;height:26px;background:#e1e1e1;border:1px solid #adadad;box-sizing:border-box;text-align:center;line-height:26px">Today</div>
<div class="tt" style="position:absolute;left:1514px;top:156px;width:28px;height:26px;background:#e1e1e1;border:1px solid #adadad;box-sizing:border-box;text-align:center;line-height:26px">+</div>
<div class="tt" style="position:absolute;left:1547px;top:156px;width:28px;height:26px;background:#e1e1e1;border:1px solid #adadad;box-sizing:border-box;text-align:center;line-height:26px">xml</div>
<div class="" style="position:absolute;left:1261px;top:183px;width:346px;height:476px;background:#f0f0f0"></div>
<div class="" style="position:absolute;left:1261px;top:183px;width:1px;height:476px;background:#a0a0a0"></div>
<div class="" style="position:absolute;left:1261px;top:183px;width:346px;height:1px;background:#a0a0a0"></div>
<div class="" style="position:absolute;left:1587px;top:184px;width:1px;height:475px;background:#fff"></div>
<div class="" style="position:absolute;left:1606px;top:184px;width:1px;height:475px;background:#fff"></div>
<div class="" style="position:absolute;left:1586px;top:184px;width:1px;height:475px;background:#f0f0f0"></div>
<div class="" style="position:absolute;left:1262px;top:184px;width:324px;height:76px;background:#f0f0f0;border-left:2px solid #727272;border-top:2px solid #727272;border-bottom:1px solid #fff;box-sizing:border-box"></div>
<div class="t " style="left:1271px;top:194.77px;color:#a0a0a0;letter-spacing:0.077px;">05.07.2021 20:39:42UT ±6.5s</div>
<div class="t " style="left:1491px;top:194.77px;color:#a0a0a0;letter-spacing:0.042px;">-1h 44m</div>
<div class="t " style="left:1271px;top:218.77px;color:#a0a0a0;letter-spacing:-0.111px;">(83830) 2001 UM22 - G172900.7-205840</div>
<div class="t " style="left:1271px;top:234.77px;color:#a0a0a0;letter-spacing:0.117px;">D=0.8s   P=8.2%   mc=13.9   dm=4.5</div>
<svg class="abs" style="left:1560px;top:194.5px" width="14" height="16" viewBox="0 0 14 16"><path d="M4.500 2.800 q2.500 -3.400 5 0" fill="none" stroke="#000" stroke-width="1.100"/><path d="M1 4 q6 -2.200 12 0" fill="none" stroke="#000" stroke-width="1.600"/><path d="M2.300 5.500 h9.400 l-1.100 9 h-7.200z" fill="#fff" stroke="#000" stroke-width="1.100"/><path d="M4.800 7.500 l0.700 5.500 M7 7.500 v5.500 M9.200 7.500 l-0.700 5.500" stroke="#000" stroke-width="0.900"/></svg>
<div class="" style="position:absolute;left:1262px;top:260px;width:324px;height:76px;background:#f0f0f0;border-left:2px solid #727272;border-top:2px solid #727272;border-bottom:1px solid #fff;box-sizing:border-box"></div>
<div class="t " style="left:1271px;top:270.77px;color:#a0a0a0;letter-spacing:0.077px;">05.07.2021 21:42:52UT ±6.9s</div>
<div class="t " style="left:1491px;top:270.77px;color:#a0a0a0;letter-spacing:0.000px;">-41m 04s</div>
<div class="t " style="left:1271px;top:294.77px;color:#a0a0a0;letter-spacing:-0.102px;">(10248) Fichtelgebirge - UCAC4 331-128675</div>
<div class="t " style="left:1271px;top:310.77px;color:#a0a0a0;letter-spacing:0.117px;">D=0.7s   P=5.5%   mc=14.6   dm=3.4</div>
<svg class="abs" style="left:1560px;top:270.5px" width="14" height="16" viewBox="0 0 14 16"><path d="M4.500 2.800 q2.500 -3.400 5 0" fill="none" stroke="#000" stroke-width="1.100"/><path d="M1 4 q6 -2.200 12 0" fill="none" stroke="#000" stroke-width="1.600"/><path d="M2.300 5.500 h9.400 l-1.100 9 h-7.200z" fill="#fff" stroke="#000" stroke-width="1.100"/><path d="M4.800 7.500 l0.700 5.500 M7 7.500 v5.500 M9.200 7.500 l-0.700 5.500" stroke="#000" stroke-width="0.900"/></svg>
<div class="" style="position:absolute;left:1262px;top:336px;width:324px;height:76px;background:#f0f0f0;border-left:2px solid #727272;border-top:2px solid #727272;border-bottom:1px solid #fff;box-sizing:border-box"></div>
<div class="t " style="left:1271px;top:346.77px;color:#a0a0a0;letter-spacing:0.077px;">05.07.2021 22:10:37UT ±2.7s</div>
<div class="t " style="left:1491px;top:346.77px;color:#a0a0a0;letter-spacing:0.000px;">-13m 19s</div>
<div class="t " style="left:1271px;top:370.77px;color:#a0a0a0;letter-spacing:-0.164px;">(5965) 1990 SV15 - UCAC4 352-102041</div>
<div class="t " style="left:1271px;top:386.77px;color:#a0a0a0;letter-spacing:0.122px;">D=0.8s   P=43.8%   mc=13.8   dm=3.4</div>
<svg class="abs" style="left:1560px;top:346.5px" width="14" height="16" viewBox="0 0 14 16"><path d="M4.500 2.800 q2.500 -3.400 5 0" fill="none" stroke="#000" stroke-width="1.100"/><path d="M1 4 q6 -2.200 12 0" fill="none" stroke="#000" stroke-width="1.600"/><path d="M2.300 5.500 h9.400 l-1.100 9 h-7.200z" fill="#fff" stroke="#000" stroke-width="1.100"/><path d="M4.800 7.500 l0.700 5.500 M7 7.500 v5.500 M9.200 7.500 l-0.700 5.500" stroke="#000" stroke-width="0.900"/></svg>
<div class="" style="position:absolute;left:1262px;top:412px;width:324px;height:76px;background:#fff;border-left:2px solid #727272;border-top:2px solid #727272;border-bottom:1px solid #fff;box-sizing:border-box"></div>
<div class="t " style="left:1271px;top:422.77px;color:#000;letter-spacing:0.077px;">05.07.2021 23:08:21UT ±4.1s</div>
<div class="t " style="left:1491px;top:422.77px;color:#000;font-weight:bold;letter-spacing:0.374px;">44m 24s</div>
<div class="t " style="left:1271px;top:446.77px;color:#000;letter-spacing:-0.144px;">(569) Misa - UCAC4 331-092136</div>
<div class="t " style="left:1271px;top:462.77px;color:#000;letter-spacing:0.122px;">D=6.0s   P=37.6%   mc=14.3   dm=0.6</div>
<div class="" style="position:absolute;left:1559px;top:422px;width:17px;height:18px;background:#e4e4e4"></div>
<svg class="abs" style="left:1560px;top:422.5px" width="14" height="16" viewBox="0 0 14 16"><path d="M4.500 2.800 q2.500 -3.400 5 0" fill="none" stroke="#000" stroke-width="1.100"/><path d="M1 4 q6 -2.200 12 0" fill="none" stroke="#000" stroke-width="1.600"/><path d="M2.300 5.500 h9.400 l-1.100 9 h-7.200z" fill="#fff" stroke="#000" stroke-width="1.100"/><path d="M4.800 7.500 l0.700 5.500 M7 7.500 v5.500 M9.200 7.500 l-0.700 5.500" stroke="#000" stroke-width="0.900"/></svg>
<div class="" style="position:absolute;left:1262px;top:488px;width:324px;height:76px;background:#f0f0f0;border-left:2px solid #727272;border-top:2px solid #727272;border-bottom:1px solid #fff;box-sizing:border-box"></div>
<div class="t " style="left:1271px;top:498.77px;color:#000;letter-spacing:0.077px;">05.07.2021 23:51:50UT ±1.8s</div>
<div class="t " style="left:1491px;top:498.77px;color:#000;letter-spacing:-0.157px;">1h 27m</div>
<div class="t " style="left:1271px;top:522.77px;color:#000;letter-spacing:-0.150px;">(2978) Roudebush - UCAC4 324-138657</div>
<div class="t " style="left:1271px;top:538.77px;color:#000;letter-spacing:0.122px;">D=1.7s   P=83.7%   mc=12.6   dm=3.7</div>
<svg class="abs" style="left:1560px;top:498.5px" width="14" height="16" viewBox="0 0 14 16"><path d="M4.500 2.800 q2.500 -3.400 5 0" fill="none" stroke="#000" stroke-width="1.100"/><path d="M1 4 q6 -2.200 12 0" fill="none" stroke="#000" stroke-width="1.600"/><path d="M2.300 5.500 h9.400 l-1.100 9 h-7.200z" fill="#fff" stroke="#000" stroke-width="1.100"/><path d="M4.800 7.500 l0.700 5.500 M7 7.500 v5.500 M9.200 7.500 l-0.700 5.500" stroke="#000" stroke-width="0.900"/></svg>
<div class="" style="position:absolute;left:1262px;top:564px;width:324px;height:76px;background:#f0f0f0;border-left:2px solid #727272;border-top:2px solid #727272;border-bottom:1px solid #fff;box-sizing:border-box"></div>
<div class="t " style="left:1271px;top:574.77px;color:#000;letter-spacing:0.077px;">06.07.2021 00:05:35UT ±7.9s</div>
<div class="t " style="left:1491px;top:574.77px;color:#000;letter-spacing:-0.157px;">1h 41m</div>
<div class="t " style="left:1271px;top:598.77px;color:#000;letter-spacing:-0.091px;">(3451) Mentor - UCAC4 486-093972</div>
<div class="t " style="left:1271px;top:614.77px;color:#000;letter-spacing:0.122px;">D=8.2s   P=20.7%   mc=15.0   dm=0.4</div>
<svg class="abs" style="left:1560px;top:574.5px" width="14" height="16" viewBox="0 0 14 16"><path d="M4.500 2.800 q2.500 -3.400 5 0" fill="none" stroke="#000" stroke-width="1.100"/><path d="M1 4 q6 -2.200 12 0" fill="none" stroke="#000" stroke-width="1.600"/><path d="M2.300 5.500 h9.400 l-1.100 9 h-7.200z" fill="#fff" stroke="#000" stroke-width="1.100"/><path d="M4.800 7.500 l0.700 5.500 M7 7.500 v5.500 M9.200 7.500 l-0.700 5.500" stroke="#000" stroke-width="0.900"/></svg>
<svg class="abs" style="left:1591px;top:190px" width="12" height="8" viewBox="0 0 12 8"><path d="M1 7 L6 2 L11 7" fill="none" stroke="#bdbdbd" stroke-width="2"/></svg>
<svg class="abs" style="left:1591px;top:643px" width="12" height="8" viewBox="0 0 12 8"><path d="M1 1 L6 6 L11 1" fill="none" stroke="#bdbdbd" stroke-width="2"/></svg>
<div class="" style="position:absolute;left:1628px;top:177px;width:200px;height:101px;border:1px solid #dcdcdc;box-sizing:border-box"></div>
<div class="t" style="left:1635px;top:170px;background:#f0f0f0;padding:0 2px;letter-spacing:-0.397px;">Event Data</div>
<div class="t " style="left:1648px;top:197.77px;">Date /</div>
<div class="t " style="left:1746px;top:197.77px;">05.07.2021</div>
<div class="t " style="left:1648px;top:223.77px;">Max. Duration</div>
<div class="t " style="left:1746px;top:223.77px;">6.0 s</div>
<div class="t " style="left:1648px;top:249.77px;">Probability</div>
<div class="t " style="left:1746px;top:249.77px;">37.6 %</div>
<div class="" style="position:absolute;left:1630px;top:297px;width:200px;height:163px;border:1px solid #dcdcdc;box-sizing:border-box"></div>
<div class="t" style="left:1637px;top:290px;background:#f0f0f0;padding:0 2px;">Objects</div>
<div class="t " style="left:1649px;top:319.77px;">Asteroid</div>
<div class="t " style="left:1747px;top:317.77px;">(569) Misa</div>
<div class="t " style="left:1649px;top:343.77px;">Star</div>
<div class="t " style="left:1747px;top:343.77px;letter-spacing:-0.731px;">UCAC4 331-092136</div>
<div class="t " style="left:1649px;top:369.77px;">Combined</div>
<div class="t " style="left:1649px;top:403.77px;">Position</div>
<div class="t " style="left:1747px;top:403.77px;">17h 04m 38s</div>
<div class="t " style="left:1649px;top:429.77px;">Distance</div>
<div class="t " style="left:1747px;top:429.77px;">-</div>
<div class="" style="position:absolute;left:1628px;top:481px;width:200px;height:87px;border:1px solid #dcdcdc;box-sizing:border-box"></div>
<div class="t" style="left:1635px;top:474px;background:#f0f0f0;padding:0 2px;">Report</div>
<div class="t " style="left:1649px;top:499.77px;">Recording</div>
<div class="t " style="left:1747px;top:499.77px;">-</div>
<div class="tt" style="position:absolute;left:1640px;top:530px;width:122px;height:26px;background:#e1e1e1;border:2px solid #0078d7;box-sizing:border-box;text-align:center;line-height:21px">Create Report...</div>
<svg class="abs" style="left:1279px;top:582px" width="14" height="22" viewBox="0 0 14 22"><path d="M1 1 V17 L4.800 13.500 L7.500 20 L10 19 L7.300 12.600 H12.500z" fill="#fff" stroke="#000" stroke-width="1"/></svg>
</body></html>
